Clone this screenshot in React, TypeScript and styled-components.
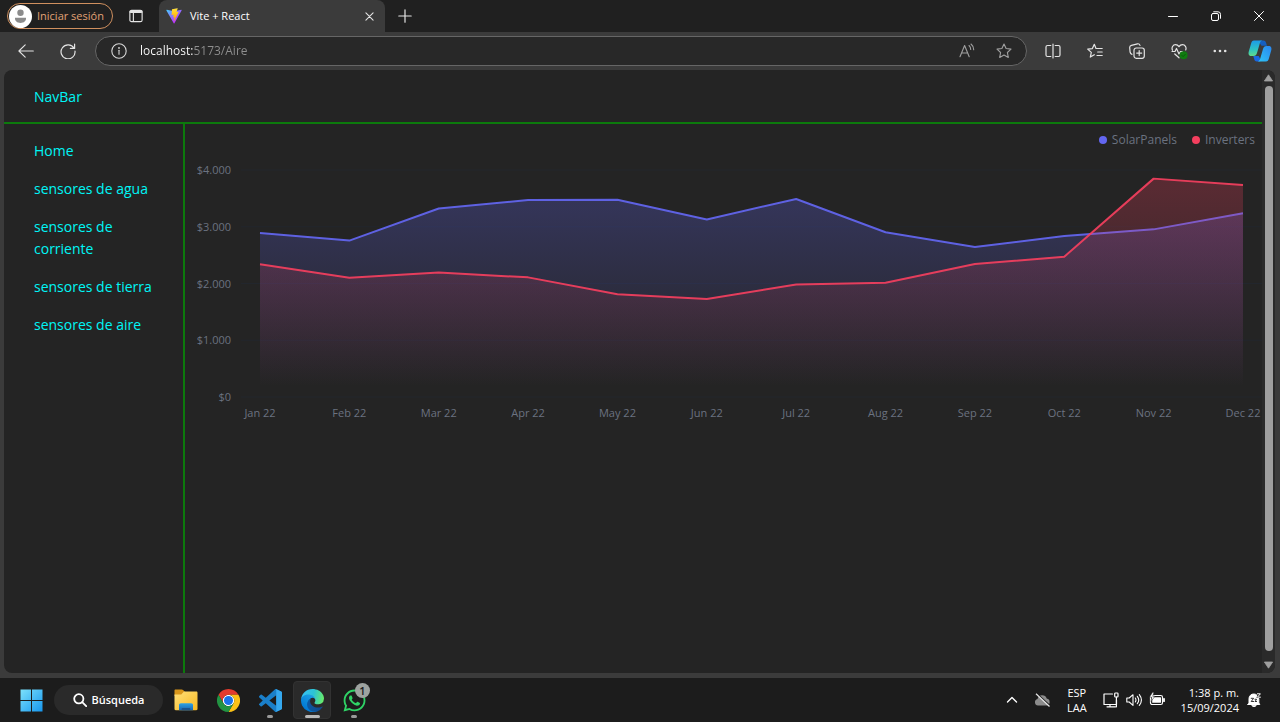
import React, { useLayoutEffect, useRef, useState } from "react";
import styled, { createGlobalStyle } from "styled-components";
import { FaWhatsapp } from "react-icons/fa";

const GlobalStyle = createGlobalStyle`
  *, *::before, *::after { box-sizing: border-box; }
  body {
    margin: 0;
    background: #3b3b3b;
    color: #fff;
    font-family: "Open Sans", "Noto Sans", sans-serif;
    font-size: 12px;
  }
  button, input { font: inherit; color: inherit; }
  svg { display: block; flex: none; }
`;

const Desktop = styled.div`
  min-height: 100vh;
  display: flex;
  flex-direction: column;
`;

/* ---------- Title bar ---------- */

const TitleBar = styled.header`
  display: flex;
  align-items: center;
  height: 32px;
  padding-left: 7px;
  background: #202020;
`;

const PlainButton = styled.button`
  display: flex;
  align-items: center;
  justify-content: center;
  padding: 0;
  border: 0;
  background: none;
`;

const ProfileButton = styled(PlainButton)`
  gap: 5px;
  height: 26px;
  padding: 0 8px 0 1px;
  border: 1px solid #d0905f;
  border-radius: 13px;
  color: #e0a276;
  font-size: 11px;
  line-height: 14px;
`;

const IconButton = styled(PlainButton)<{ $width: number; $color?: string }>`
  flex: none;
  width: ${(p) => p.$width}px;
  height: 30px;
  color: ${(p) => p.$color ?? "#e4e4e4"};
`;

const Tab = styled.div`
  display: flex;
  align-items: center;
  gap: 8px;
  width: 226px;
  height: 32px;
  padding: 0 4px 0 7px;
  border-radius: 8px 8px 0 0;
  background: #3b3b3b;
  font-size: 11px;
  line-height: 14px;
`;

const TabTitle = styled.span`
  flex: 1;
`;

const WindowControls = styled.div`
  display: flex;
  margin-left: auto;
`;

/* ---------- Tool bar ---------- */

const ToolBar = styled.div`
  display: flex;
  align-items: center;
  height: 38px;
  padding-left: 5px;
  background: #3b3b3b;
`;

const AddressBar = styled.label`
  flex: 1;
  display: flex;
  align-items: center;
  height: 30px;
  margin: 0 5px 0 7px;
  padding: 0 4px 0 15px;
  border: 1px solid #666;
  border-radius: 15px;
  background: #282828;
  color: #d8d8d8;
`;

const AddressInput = styled.input`
  flex: 1;
  min-width: 0;
  margin-left: 13px;
  padding: 0;
  border: 0;
  outline: 0;
  font-size: 12px;
  line-height: 20px;
  background: linear-gradient(90deg, #fff 53px, #8f8f8f 53px);
  background-clip: text;
  -webkit-background-clip: text;
  -webkit-text-fill-color: transparent;
`;

/* ---------- Web page ---------- */

const Frame = styled.div`
  flex: 1;
  display: flex;
  padding: 0 5px 5px 4px;
  background: #3b3b3b;
`;

const Viewport = styled.div`
  flex: 1;
  display: flex;
  min-width: 0;
  overflow: hidden;
  border-radius: 8px;
  background: #242424;
`;

const Page = styled.div`
  flex: 1;
  display: flex;
  flex-direction: column;
  min-width: 0;
`;

const NavBar = styled.nav`
  height: 54px;
  padding: 16px 30px;
  border-bottom: 2px solid #0c7a0c;
`;

const PageLink = styled.a`
  display: block;
  color: #00f6f6;
  font-size: 14px;
  line-height: 22px;
  text-decoration: none;
`;

const Columns = styled.div`
  flex: 1;
  display: flex;
`;

const SideBar = styled.aside`
  flex: none;
  width: 181px;
  padding: 16px 24px 16px 30px;
  border-right: 2px solid #0c7a0c;
`;

const SideList = styled.ul`
  display: flex;
  flex-direction: column;
  gap: 16px;
  margin: 0;
  padding: 0;
  list-style: none;
`;

const Main = styled.main`
  flex: 1;
  min-width: 0;
`;

const Legend = styled.ul`
  display: flex;
  justify-content: flex-end;
  gap: 15px;
  margin: 0;
  padding: 6px 7px 7px 0;
  list-style: none;
  color: #6b7280;
  font-size: 12px;
  line-height: 20px;
`;

const LegendItem = styled.li<{ $color: string }>`
  display: flex;
  align-items: center;
  gap: 5px;
  &::before {
    content: "";
    width: 8px;
    height: 8px;
    border-radius: 50%;
    background: ${(p) => p.$color};
  }
`;

const ChartSvg = styled.svg`
  width: 100%;
  height: 270px;
  overflow: visible;
  text {
    fill: #6b7280;
    font-size: 11px;
  }
`;

const ScrollBar = styled.div`
  flex: none;
  display: flex;
  flex-direction: column;
  align-items: center;
  gap: 4px;
  width: 13px;
  padding: 4px 0;
  background: #2a2a2a;
`;

const ScrollThumb = styled.div`
  flex: 1;
  width: 8px;
  margin-bottom: 6px;
  border-radius: 4px;
  background: #9f9f9f;
`;

/* ---------- Task bar ---------- */

const TaskBar = styled.footer`
  display: flex;
  align-items: center;
  gap: 4px;
  height: 44px;
  padding: 0 19px 0 12px;
  background: #1c1c1c;
`;

const TaskButton = styled(PlainButton)<{ $state?: "open" | "active" }>`
  position: relative;
  width: 38px;
  height: 38px;
  border-radius: 4px;
  border: 1px solid ${(p) => (p.$state === "active" ? "#323232" : "transparent")};
  background: ${(p) => (p.$state === "active" ? "#2a2a2a" : "none")};
  &::after {
    content: "";
    display: ${(p) => (p.$state ? "block" : "none")};
    position: absolute;
    bottom: 0;
    width: ${(p) => (p.$state === "active" ? 15 : 6)}px;
    height: 3px;
    border-radius: 2px;
    background: ${(p) => (p.$state === "active" ? "#b9b9b9" : "#9a9a9a")};
  }
`;

const Badge = styled.span`
  position: absolute;
  top: 1px;
  right: 2px;
  width: 15px;
  height: 15px;
  border-radius: 50%;
  background: #9ea3a0;
  color: #1c1c1c;
  font-size: 11px;
  font-weight: 600;
  line-height: 15px;
  text-align: center;
`;

const SearchButton = styled(PlainButton)`
  gap: 5px;
  width: 109px;
  height: 30px;
  border-radius: 15px;
  background: #2a2a2a;
  font-size: 11px;
  font-weight: 600;
  line-height: 14px;
`;

const Tray = styled.div`
  display: flex;
  align-items: center;
  margin-left: auto;
  font-size: 11px;
  line-height: 15px;
`;

const TrayGroup = styled(PlainButton)<{ $gap?: number }>`
  gap: ${(p) => p.$gap ?? 0}px;
  margin-left: 16px;
`;

const TrayText = styled.span<{ $align: "center" | "right" }>`
  text-align: ${(p) => p.$align};
  white-space: pre-line;
`;

/* ---------- Icons ---------- */

type IconProps = {
  size?: number;
  box?: number;
  stroke?: number;
  children: React.ReactNode;
};

const Line = ({ size = 16, box = 16, stroke = 1, children }: IconProps) => (
  <svg
    width={size}
    height={size}
    viewBox={`0 0 ${box} ${box}`}
    fill="none"
    stroke="currentColor"
    strokeWidth={stroke}
    strokeLinecap="round"
    strokeLinejoin="round"
    aria-hidden="true"
  >
    {children}
  </svg>
);

const AvatarIcon = () => (
  <svg width="23" height="23" viewBox="0 0 23 23" aria-hidden="true">
    <circle cx="11.5" cy="11.5" r="11.5" fill="#fff" />
    <circle cx="11.5" cy="7.8" r="3.2" fill="#8b8b8b" />
    <path d="M6 12.8h11c.4 3.300-2.200 5.200-5.500 5.200S5.600 16.100 6 12.800z" fill="#8b8b8b" />
  </svg>
);

const ViteIcon = () => (
  <svg width="16" height="16" viewBox="0 0 410 404" aria-hidden="true">
    <defs>
      <linearGradient id="vite-a" x1="6" y1="33" x2="235" y2="344" gradientUnits="userSpaceOnUse">
        <stop stopColor="#41D1FF" />
        <stop offset="1" stopColor="#BD34FE" />
      </linearGradient>
      <linearGradient id="vite-b" x1="194.651" y1="8.818" x2="236.076" y2="292.989" gradientUnits="userSpaceOnUse">
        <stop stopColor="#FFEA83" />
        <stop offset=".083" stopColor="#FFDD35" />
        <stop offset="1" stopColor="#FFA800" />
      </linearGradient>
    </defs>
    <path
      fill="url(#vite-a)"
      d="M399.641 59.525 215.643 388.545c-3.799 6.793-13.559 6.833-17.415.073L10.582 59.556C6.381 52.190 12.680 43.267 21.028 44.759l184.195 32.923c1.175.21 2.378.208 3.553-.006l180.343-32.870c8.320-1.517 14.649 7.337 10.522 14.719z"
    />
    <path
      fill="url(#vite-b)"
      d="M292.965 1.574 156.801 28.255c-2.238.439-3.895 2.335-4.030 4.611L144.395 174.330c-.197 3.332 2.863 5.918 6.115 5.168l37.910-8.749c3.547-.818 6.752 2.306 6.023 5.873l-11.263 55.153c-.758 3.712 2.727 6.886 6.352 5.785l23.415-7.114c3.630-1.102 7.118 2.081 6.350 5.796l-17.899 86.633c-1.120 5.419 6.088 8.374 9.094 3.728l2.008-3.103L323.454 102.072c1.858-3.708-1.346-7.935-5.418-7.149l-39.022 7.531c-3.667.707-6.787-2.708-5.752-6.296L298.731 7.867c1.036-3.594-2.095-7.012-5.766-6.293z"
    />
  </svg>
);

const CopilotIcon = () => (
  <svg width="24" height="22" viewBox="0 0 24 22" aria-hidden="true">
    <defs>
      <linearGradient id="cop-a" x1="0" y1="0" x2="0" y2="1">
        <stop stopColor="#1c9be8" />
        <stop offset=".6" stopColor="#2fc4c0" />
        <stop offset="1" stopColor="#62d98a" />
      </linearGradient>
      <linearGradient id="cop-b" x1="0" y1="1" x2="1" y2="0">
        <stop stopColor="#2ec5f6" />
        <stop offset="1" stopColor="#2a86f0" />
      </linearGradient>
    </defs>
    <path d="M12 .5h3.500c1.600 0 2.300 1.200 2.700 2.700l.8 2.600h-5.500L11 2z" fill="#155fc0" />
    <path d="M12 21.500H8.800c-1.600 0-2.200-1-2.700-2.700L5.300 16h5.300l2.400 4z" fill="#1a66e0" />
    <path d="M6 .5h8.200c-1.400.3-2 1.600-2.500 3.200L9 13c-.6 1.900-1.500 3-3.500 3H3.200C.6 16 .2 13.800.8 11.500l2.300-8C3.600 1.700 4.400.5 6 .5z" fill="url(#cop-a)" />
    <path d="M18 21.500H9.800c1.400-.3 2-1.600 2.500-3.200L15 9c.6-1.900 1.500-3 3.500-3h2.300c2.600 0 3 2.200 2.400 4.500l-2.300 8c-.5 1.800-1.300 3-2.900 3z" fill="url(#cop-b)" />
  </svg>
);

const WindowsIcon = () => (
  <svg width="23" height="23" viewBox="0 0 23 23" aria-hidden="true">
    <defs>
      <linearGradient id="win" x1="0" y1="0" x2="23" y2="23" gradientUnits="userSpaceOnUse">
        <stop stopColor="#7fe3fb" />
        <stop offset="1" stopColor="#1495ee" />
      </linearGradient>
    </defs>
    <path fill="url(#win)" d="M.5 .5h10.500v10.500H.5V1zM12 .5h10.500V11H12zM.5 12H11v10.500H.5zM12 12h10.500v10.500H12z" />
  </svg>
);

const FolderIcon = () => (
  <svg width="24" height="22" viewBox="0 0 24 22" aria-hidden="true">
    <defs>
      <linearGradient id="fold" x1="0" y1="0" x2="1" y2="1">
        <stop stopColor="#ffe07a" />
        <stop offset="1" stopColor="#f8b921" />
      </linearGradient>
      <linearGradient id="fold-b" x1="0" y1="0" x2="0" y2="1">
        <stop stopColor="#2ea3e6" />
        <stop offset="1" stopColor="#1765b0" />
      </linearGradient>
    </defs>
    <path d="M1.500.5h6.200c.6 0 1 .2 1.400.6L11 3v4H.5V1.500c0-.6.4-1 1-1z" fill="#d9961a" />
    <path d="M10 2.500h12.300c.7 0 1.200.5 1.200 1.200V20c0 .7-.5 1.200-1.200 1.200H1.700C1 21.200.5 20.700.5 20V5.500h6.800z" fill="url(#fold)" />
    <path d="M5 21.200v-5.200c0-1 .8-1.800 1.800-1.800h10.400c1 0 1.800.8 1.800 1.800v5.200z" fill="url(#fold-b)" />
    <path d="M8.500 19h7c.5 0 .8.300.8.8v1.400H7.700v-1.400c0-.5.3-.8.8-.8z" fill="#1a548f" />
  </svg>
);

const ChromeIcon = () => (
  <svg width="23" height="23" viewBox="0 0 48 48" aria-hidden="true">
    <circle cx="24" cy="24" r="12" fill="#fff" />
    <path fill="#e33b2e" d="M24 12h20.781A23.994 23.994 0 0 0 3.216 12.003L13.608 30l.009-.002A11.985 11.985 0 0 1 24 12z" />
    <path fill="#fbc116" d="M34.391 30.003 24.001 48A23.994 23.994 0 0 0 44.780 12.003H23.999l-.003.009a11.985 11.985 0 0 1 10.395 17.991z" />
    <path fill="#229342" d="M13.609 30.003 3.218 12.006A23.994 23.994 0 0 0 24.003 48l10.390-17.997-.007-.007a11.985 11.985 0 0 1-20.778.007z" />
    <circle cx="24" cy="24" r="9.500" fill="#1a73e8" />
  </svg>
);

const CodeIcon = () => (
  <svg width="23" height="23" viewBox="0 0 100 100" aria-hidden="true">
    <path
      fill="#1a7fc9"
      fillRule="evenodd"
      d="M70.9 99.300a6.200 6.200 0 0 0 5-.2l20.500-9.900a6.300 6.300 0 0 0 3.600-5.600V16.400a6.300 6.300 0 0 0-3.600-5.600L75.900.9a6.200 6.200 0 0 0-7.100 1.200L29.400 38 12.200 25a4.200 4.200 0 0 0-5.300.2L1.400 30.300a4.200 4.200 0 0 0 0 6.200L16.300 50 1.400 63.600a4.200 4.200 0 0 0 0 6.200l5.500 5a4.200 4.200 0 0 0 5.300.2l17.200-13 39.400 36a6.200 6.200 0 0 0 2.100 1.300zM75 27.300 45.100 50 75 72.700z"
    />
    <path fill="#35a8ee" d="M75.900.9 96.400 10.800a6.300 6.300 0 0 1 3.600 5.600v67.200a6.300 6.300 0 0 1-3.600 5.600L75.900 99.100a6.200 6.200 0 0 1-4.800.2C74 99 75 97 75 95V5c0-2-1-4-4-4.300a6.200 6.200 0 0 1 4.900.2z" />
  </svg>
);

const EdgeIcon = () => (
  <svg width="23" height="23" viewBox="0 0 256 256" aria-hidden="true">
    <defs>
      <linearGradient id="edge-a" x1="63" y1="178" x2="241" y2="178" gradientUnits="userSpaceOnUse">
        <stop stopColor="#0c59a4" />
        <stop offset="1" stopColor="#114a8b" />
      </linearGradient>
      <linearGradient id="edge-b" x1="140" y1="90" x2="40" y2="220" gradientUnits="userSpaceOnUse">
        <stop stopColor="#1b9de2" />
        <stop offset="1" stopColor="#0078d4" />
      </linearGradient>
      <linearGradient id="edge-c" x1="20" y1="60" x2="245" y2="110" gradientUnits="userSpaceOnUse">
        <stop stopColor="#35c1f1" />
        <stop offset=".5" stopColor="#2cc3d5" />
        <stop offset="1" stopColor="#66eb6e" />
      </linearGradient>
    </defs>
    <path fill="url(#edge-a)" d="M235.700 195.500a93.700 93.700 0 0 1-10.600 4.700 101.900 101.900 0 0 1-35.900 6.400c-47.300 0-88.500-32.500-88.500-74.300a31.500 31.500 0 0 1 16.400-27.300c-42.800 1.800-53.800 46.400-53.800 72.500 0 74 68.100 81.400 82.800 81.400 7.900 0 19.800-2.300 27-4.600l1.300-.4a128.300 128.300 0 0 0 66.600-52.800 4 4 0 0 0-5.300-5.600z" />
    <path fill="url(#edge-b)" d="M105.700 241.400a79.200 79.200 0 0 1-22.700-21.300 80.700 80.700 0 0 1 29.500-120c3.200-1.500 8.500-4.100 15.600-4a32.400 32.400 0 0 1 25.700 13 31.900 31.900 0 0 1 6.300 18.700c0-.2 24.500-79.600-80-79.600-43.900 0-80 41.600-80 78.200a130.200 130.200 0 0 0 12.100 56 128 128 0 0 0 156.400 67 75.500 75.500 0 0 1-62.800-8z" />
    <path fill="url(#edge-c)" d="M152.300 148.900c-.9 1-3.400 2.500-3.400 5.600 0 2.600 1.700 5.200 4.800 7.300 14.300 10 41.400 8.600 41.500 8.600a59.600 59.600 0 0 0 30.300-8.300 61.400 61.400 0 0 0 30.400-52.900c.3-22.400-8-37.300-11.300-43.900C223.500 23.900 177.700.1 128 .1A128 128 0 0 0 0 126.200c.5-36.500 36.800-66 80-66 3.500 0 23.500.3 42 10 16.300 8.600 24.900 19 30.800 29.300 6.200 10.700 7.300 24.100 7.300 29.500s-2.700 13.300-7.800 19.900z" />
  </svg>
);

/* ---------- Chart ---------- */

const months = ["Jan", "Feb", "Mar", "Apr", "May", "Jun", "Jul", "Aug", "Sep", "Oct", "Nov", "Dec"];

const series = [
  {
    name: "SolarPanels",
    color: "#6366f1",
    values: [2890, 2756, 3322, 3470, 3475, 3129, 3490, 2903, 2643, 2837, 2954, 3239],
  },
  {
    name: "Inverters",
    color: "#f43f5e",
    values: [2338, 2103, 2194, 2108, 1812, 1726, 1982, 2012, 2342, 2473, 3848, 3736],
  },
];

const ticks = [
  { value: 4000, label: "$4.000" },
  { value: 3000, label: "$3.000" },
  { value: 2000, label: "$2.000" },
  { value: 1000, label: "$1.000" },
  { value: 0, label: "$0" },
];

const plot = { left: 75, right: 19, top: 13, bottom: 240 };

function AreaChart() {
  const ref = useRef<SVGSVGElement>(null);
  const [width, setWidth] = useState(1000);

  useLayoutEffect(() => {
    const node = ref.current;
    if (!node) return;
    const measure = () => setWidth(node.getBoundingClientRect().width);
    measure();
    const observer = new ResizeObserver(measure);
    observer.observe(node);
    return () => observer.disconnect();
  }, []);

  const x = (i: number) => plot.left + ((width - plot.left - plot.right) * i) / (months.length - 1);
  const y = (v: number) => plot.bottom - ((plot.bottom - plot.top) * v) / 4000;

  return (
    <ChartSvg ref={ref} role="img" aria-label="SolarPanels, Inverters">
      <defs>
        {series.map((s) => (
          <linearGradient key={s.name} id={`fill-${s.name}`} x1="0" y1="0" x2="0" y2="1">
            <stop offset="5%" stopColor={s.color} stopOpacity="0.25" />
            <stop offset="95%" stopColor={s.color} stopOpacity="0" />
          </linearGradient>
        ))}
      </defs>
      {ticks.map((t) => (
        <React.Fragment key={t.value}>
          <line x1={plot.left - 19} x2={width} y1={y(t.value)} y2={y(t.value)} stroke="#22262d" />
          <text x={46} y={y(t.value) + 4} textAnchor="end">
            {t.label}
          </text>
        </React.Fragment>
      ))}
      {months.map((m, i) => (
        <text key={m} x={x(i)} y={260} textAnchor="middle">
          {m} 22
        </text>
      ))}
      {series.map((s) => {
        const points = s.values.map((v, i) => `${x(i)},${y(v)}`).join(" ");
        return (
          <g key={s.name}>
            <polygon
              points={`${x(0)},${plot.bottom} ${points} ${x(months.length - 1)},${plot.bottom}`}
              fill={`url(#fill-${s.name})`}
            />
            <polyline
              points={points}
              fill="none"
              stroke={s.color}
              strokeOpacity="0.92"
              strokeWidth="2"
              strokeLinejoin="round"
            />
          </g>
        );
      })}
    </ChartSvg>
  );
}

const sideLinks = [
  { label: "Home", href: "/" },
  { label: "sensores de agua", href: "/Agua" },
  { label: "sensores de corriente", href: "/Corriente" },
  { label: "sensores de tierra", href: "/Tierra" },
  { label: "sensores de aire", href: "/Aire" },
];

export default function App() {
  return (
    <Desktop>
      <GlobalStyle />
      <TitleBar>
        <ProfileButton>
          <AvatarIcon />
          Iniciar sesión
        </ProfileButton>
        <IconButton $width={46} aria-label="Acciones de pestaña">
          <Line size={14} stroke={1.3}>
            <rect x="1" y="1.500" width="14" height="13" rx="2" />
            <path d="M2 3.200h12" strokeWidth="3" />
            <path d="M5 4v10" />
          </Line>
        </IconButton>
        <Tab>
          <ViteIcon />
          <TabTitle>Vite + React</TabTitle>
          <IconButton $width={22} aria-label="Cerrar pestaña">
            <Line size={9} box={10} stroke={1.2}>
              <path d="M1 1l8 8M9 1l-8 8" />
            </Line>
          </IconButton>
        </Tab>
        <IconButton $width={40} aria-label="Nueva pestaña">
          <Line size={14} box={14} stroke={1.2}>
            <path d="M7 .8v12.400M.8 7h12.400" />
          </Line>
        </IconButton>
        <WindowControls>
          <IconButton $width={43} $color="#fff" aria-label="Minimizar">
            <Line size={10} box={10}>
              <path d="M.5 5.500h9" />
            </Line>
          </IconButton>
          <IconButton $width={43} $color="#fff" aria-label="Restaurar">
            <Line size={10} box={10}>
              <rect x=".5" y="2.500" width="7" height="7" rx="1.500" />
              <path d="M2.700.8H7A2.500 2.500 0 0 1 9.500 3.300v4" />
            </Line>
          </IconButton>
          <IconButton $width={43} $color="#fff" aria-label="Cerrar">
            <Line size={10} box={10}>
              <path d="M.5.5l9 9M9.500.5l-9 9" />
            </Line>
          </IconButton>
        </WindowControls>
      </TitleBar>

      <ToolBar>
        <IconButton $width={42} aria-label="Atrás">
          <Line size={16} stroke={1.100}>
            <path d="M15.300 8H1M7.200 1.800L.9 8l6.300 6.200" />
          </Line>
        </IconButton>
        <IconButton $width={41} aria-label="Actualizar">
          <Line size={16} stroke={1.200}>
            <path d="M14 5.200A7 7 0 1 0 15 8M14.600 1.200v4.200h-4.200" />
          </Line>
        </IconButton>
        <AddressBar>
          <Line size={16} stroke={1.100}>
            <circle cx="8" cy="8" r="7.200" />
            <path d="M8 7.300v4" />
            <circle cx="8" cy="4.900" r=".4" />
          </Line>
          <AddressInput aria-label="Dirección" defaultValue="localhost:5173/Aire" />
          <IconButton $width={38} $color="#a0a0a0" aria-label="Leer en voz alta">
            <Line size={16} stroke={1.100}>
              <path d="M1 13.800L5.600 2.500l4.600 11.300M2.600 10h6M10 2.500c1.200 1 1.700 2.300 1.700 4M12 1c1.900 1.500 2.700 3.500 2.700 5.800" />
            </Line>
          </IconButton>
          <IconButton $width={36} $color="#a0a0a0" aria-label="Agregar a favoritos">
            <Line size={16} stroke={1.100}>
              <path d="M8 1l2.100 4.500 4.900.6-3.600 3.400.9 4.900L8 12l-4.300 2.400.9-4.900L1 6.100l4.900-.6z" />
            </Line>
          </IconButton>
        </AddressBar>
        <IconButton $width={42} aria-label="Pantalla dividida">
          <Line size={16} stroke={1.200}>
            <path d="M5.800 2.500H2.500a1.500 1.500 0 0 0-1.500 1.500v8a1.500 1.500 0 0 0 1.500 1.500h3.300M10.200 2.500h3.300A1.500 1.500 0 0 1 15 4v8a1.500 1.500 0 0 1-1.500 1.500h-3.300M8 1v14" />
          </Line>
        </IconButton>
        <IconButton $width={42} aria-label="Favoritos">
          <Line size={16} stroke={1.200}>
            <path d="M9.300 5.500h5.900M10.700 9h4.500M10 12.500h5.200M9 5.400L7.300 1.300 5.400 5.600.7 6.100l3.600 3.300-1 4.700 4-2.400" />
          </Line>
        </IconButton>
        <IconButton $width={42} aria-label="Colecciones">
          <Line size={16} stroke={1.200}>
            <rect x="5" y="5" width="10.300" height="10.300" rx="2.200" />
            <path d="M10.200 7.600v5M7.700 10.100h5M3 11.400C1.800 11 1.300 10.300 1.100 9.200L.7 4.700c-.1-1.200.5-2 1.700-2.300L8.500.8c1.200-.2 2 .2 2.500 1.600" />
          </Line>
        </IconButton>
        <IconButton $width={42} aria-label="Rendimiento">
          <Line size={17} box={17} stroke={1.200}>
            <path d="M1.500 7.300C.2 4.500 2 1.700 4.500 1.700c1.500 0 2.700.8 3.500 2 .8-1.200 2-2 3.500-2 2.500 0 4.300 2.600 3.200 5.300M3.800 11L8 14.800M1 8.500h3l1.500-3 2.500 5.500 1.500-2.500h2" />
            <circle cx="12.600" cy="12.300" r="4" fill="#107c10" stroke="none" />
            <path d="M10.900 12.400l1.200 1.200 2.200-2.300" stroke="#0b5a0b" strokeWidth="1" />
          </Line>
        </IconButton>
        <IconButton $width={40} aria-label="Configuración y más">
          <Line size={16}>
            <g fill="currentColor" stroke="none">
              <circle cx="2.800" cy="8" r="1.300" />
              <circle cx="8" cy="8" r="1.300" />
              <circle cx="13.200" cy="8" r="1.300" />
            </g>
          </Line>
        </IconButton>
        <IconButton $width={40} aria-label="Copilot">
          <CopilotIcon />
        </IconButton>
      </ToolBar>

      <Frame>
        <Viewport>
          <Page>
            <NavBar>
              <PageLink href="/">NavBar</PageLink>
            </NavBar>
            <Columns>
              <SideBar>
                <SideList>
                  {sideLinks.map((l) => (
                    <li key={l.label}>
                      <PageLink href={l.href}>{l.label}</PageLink>
                    </li>
                  ))}
                </SideList>
              </SideBar>
              <Main>
                <Legend>
                  {series.map((s) => (
                    <LegendItem key={s.name} $color={s.color}>
                      {s.name}
                    </LegendItem>
                  ))}
                </Legend>
                <AreaChart />
              </Main>
            </Columns>
          </Page>
          <ScrollBar aria-hidden="true">
            <svg width="9" height="8" viewBox="0 0 9 8">
              <path d="M4.500.8L8.600 7H.4z" fill="#9f9f9f" stroke="#9f9f9f" strokeLinejoin="round" strokeWidth=".8" />
            </svg>
            <ScrollThumb />
            <svg width="9" height="8" viewBox="0 0 9 8">
              <path d="M4.500 7.200L.4 1h8.200z" fill="#9f9f9f" stroke="#9f9f9f" strokeLinejoin="round" strokeWidth=".8" />
            </svg>
          </ScrollBar>
        </Viewport>
      </Frame>

      <TaskBar>
        <TaskButton aria-label="Inicio">
          <WindowsIcon />
        </TaskButton>
        <SearchButton>
          <Line size={14} box={14} stroke={1.800}>
            <circle cx="5.800" cy="5.800" r="4.600" />
            <path d="M9.200 9.200l4 4" />
          </Line>
          Búsqueda
        </SearchButton>
        <TaskButton aria-label="Explorador de archivos">
          <FolderIcon />
        </TaskButton>
        <TaskButton aria-label="Chrome">
          <ChromeIcon />
        </TaskButton>
        <TaskButton aria-label="Visual Studio Code" $state="open">
          <CodeIcon />
        </TaskButton>
        <TaskButton aria-label="Edge" $state="active">
          <EdgeIcon />
        </TaskButton>
        <TaskButton aria-label="WhatsApp" $state="open">
          <FaWhatsapp size={25} color="#2fd366" />
          <Badge>1</Badge>
        </TaskButton>

        <Tray>
          <TrayGroup aria-label="Iconos ocultos">
            <Line size={12} box={12} stroke={1.400}>
              <path d="M1.500 8L6 3.500 10.500 8" />
            </Line>
          </TrayGroup>
          <TrayGroup aria-label="OneDrive">
            <svg width="17" height="14" viewBox="0 0 17 14" aria-hidden="true">
              <path d="M4 12.500a3.300 3.300 0 0 1-.5-6.500 4.800 4.800 0 0 1 9.200-.5 3.600 3.600 0 0 1 .3 7z" fill="#8c8c8c" />
              <path d="M3 .8l13 12" stroke="#1c1c1c" strokeWidth="1.500" />
              <path d="M2 .8l13.500 12.700" stroke="#e6e6e6" strokeWidth="1.200" />
            </svg>
          </TrayGroup>
          <TrayGroup>
            <TrayText $align="center">{"ESP\nLAA"}</TrayText>
          </TrayGroup>
          <TrayGroup $gap={7} aria-label="Red, sonido y batería">
            <Line size={16} stroke={1.200}>
              <path d="M9.500 2H1v10.500h12.500V8M7 12.500v2.300M4 14.800h8.500" />
              <rect x="11.700" y="1" width="3.300" height="4" rx=".8" />
              <path d="M13.400 5v9.800" />
            </Line>
            <Line size={16} stroke={1.100}>
              <path d="M.8 6v4h2.400L7 13.300V2.700L3.200 6zM9.300 6c.8 1.200.8 2.800 0 4M11.300 4.300c1.800 2.300 1.800 5.100 0 7.400M13.300 2.600c2.600 3.300 2.600 7.500 0 10.800" />
            </Line>
            <Line size={16} stroke={1.200}>
              <rect x="1.500" y="3.500" width="12" height="9" rx="1.800" />
              <path d="M15 6.800v2.400" strokeWidth="1.800" />
              <rect x="3.200" y="5.200" width="8.800" height="5.600" rx=".5" fill="currentColor" stroke="none" />
              <path d="M3.500.3L.5 5.200h2.200L2 9.500l3.900-5.300H3.700L4.900.6z" fill="currentColor" stroke="#1c1c1c" strokeWidth=".5" />
            </Line>
          </TrayGroup>
          <TrayGroup $gap={8}>
            <TrayText $align="right">{"1:38 p. m.\n15/09/2024"}</TrayText>
            <Line size={14} box={14} stroke={1}>
              <path d="M2 10V5.500A4.600 4.600 0 0 1 6.800 1c1.200 0 2.200.4 3 1L8.800 5.500h3V10l1 1.500H.9z" fill="currentColor" />
              <path d="M5 12.600a2.200 2.200 0 0 0 4 0z" fill="currentColor" />
              <path d="M10.400.8h3l-3 3.400h3" />
              <path d="M4.200 5.300h2.400L4.200 8.500h2.400M8 6.300h1.600L8 8.500h1.600" stroke="#1c1c1c" strokeWidth=".9" />
            </Line>
          </TrayGroup>
        </Tray>
      </TaskBar>
    </Desktop>
  );
}
